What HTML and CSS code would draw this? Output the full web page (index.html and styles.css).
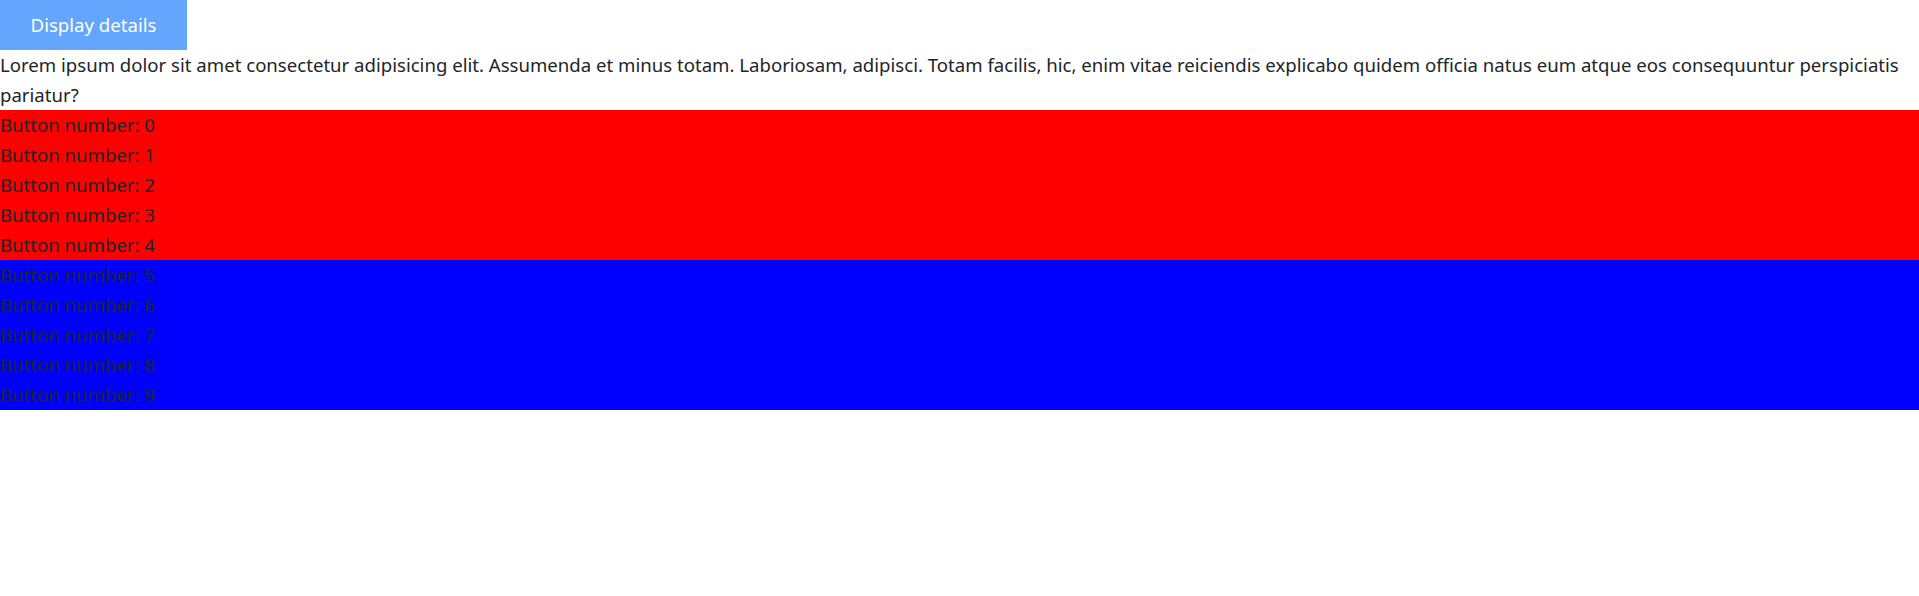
FILE: index.html
```html
<!DOCTYPE html>
<html>
<head>
<meta charset="utf-8">
<link rel="stylesheet" href="styles.css">
</head>
<body>
<button class="details-btn">Display details</button>
<p class="lorem">Lorem ipsum dolor sit amet consectetur adipisicing elit. Assumenda et minus totam. Laboriosam, adipisci. Totam facilis, hic, enim vitae reiciendis explicabo quidem officia natus eum atque eos consequuntur perspiciatis pariatur?</p>
<div class="group red">
  <div class="row">Button number: 0</div>
  <div class="row">Button number: 1</div>
  <div class="row">Button number: 2</div>
  <div class="row">Button number: 3</div>
  <div class="row">Button number: 4</div>
</div>
<div class="group blue">
  <div class="row">Button number: 5</div>
  <div class="row">Button number: 6</div>
  <div class="row">Button number: 7</div>
  <div class="row">Button number: 8</div>
  <div class="row">Button number: 9</div>
</div>
</body>
</html>
```
FILE: styles.css
```css
html, body {
  margin: 0;
  padding: 0;
  background: #fff;
}
body {
  font-family: "Noto Sans", "Open Sans", sans-serif;
  font-size: 18.6px;
  line-height: 30px;
  color: #212529;
}
.details-btn {
  display: block;
  width: 187px;
  height: 50px;
  margin: 0;
  padding: 0;
  border: none;
  background: #64a6fd;
  color: #fff;
  font-family: inherit;
  font-size: 18.6px;
  line-height: 30px;
}
.lorem {
  margin: 0;
}
.group {
  display: flex;
  flex-direction: column;
}
.red { background: #ff0000; }
.blue { background: #0000ff; }
.row {
  height: 30px;
}
```
